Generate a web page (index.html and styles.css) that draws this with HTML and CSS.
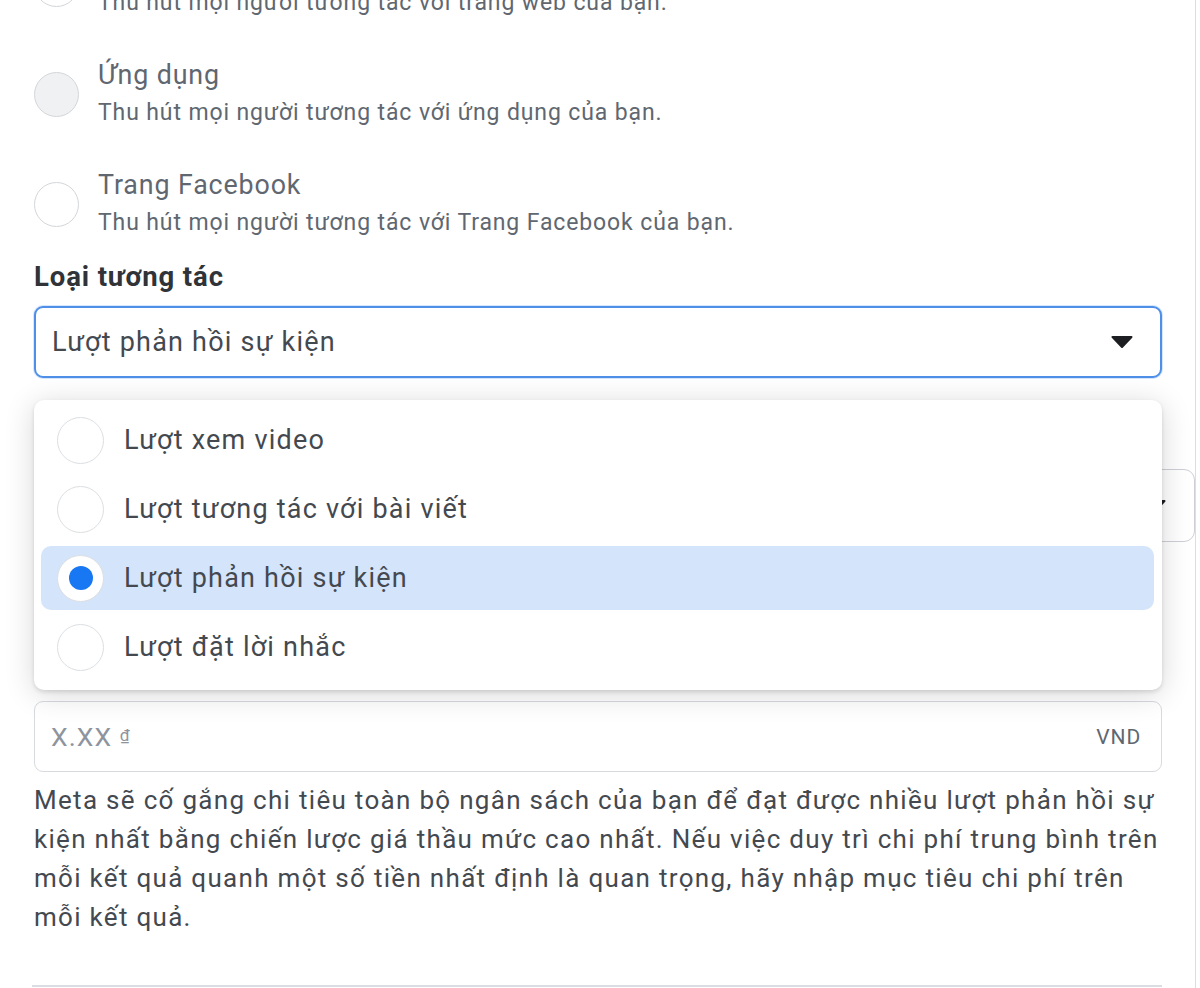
FILE: index.html
```html
<!DOCTYPE html>
<html lang="vi">
<head>
  <meta charset="UTF-8" />
  <title>Loại tương tác</title>
  <meta name="viewport" content="width=device-width, initial-scale=1.0" />
  <link rel="stylesheet" href="styles.css">
</head>
<body>
  <div class="panel">
    <div class="options">
      <div class="option">
        <span class="radio"></span>
        <div class="option-text">
          <div class="option-title">Trang web</div>
          <div class="option-desc">Thu hút mọi người tương tác với trang web của bạn.</div>
        </div>
      </div>
      <div class="option">
        <span class="radio disabled"></span>
        <div class="option-text">
          <div class="option-title">Ứng dụng</div>
          <div class="option-desc">Thu hút mọi người tương tác với ứng dụng của bạn.</div>
        </div>
      </div>
      <div class="option">
        <span class="radio"></span>
        <div class="option-text">
          <div class="option-title">Trang Facebook</div>
          <div class="option-desc">Thu hút mọi người tương tác với Trang Facebook của bạn.</div>
        </div>
      </div>
    </div>

    <div class="field-label">Loại tương tác</div>
    <div class="dropdown">
      <div class="select focused">
        <span>Lượt phản hồi sự kiện</span>
        <svg class="caret" width="22" height="12" viewBox="0 0 22 12"><path d="M1.5 1h19L11 11z" fill="#1c1e21" stroke="#1c1e21" stroke-width="2" stroke-linejoin="round"/></svg>
      </div>
      <ul class="menu">
        <li class="menu-item"><span class="radio"></span>Lượt xem video</li>
        <li class="menu-item"><span class="radio"></span>Lượt tương tác với bài viết</li>
        <li class="menu-item selected"><span class="radio checked"></span>Lượt phản hồi sự kiện</li>
        <li class="menu-item"><span class="radio"></span>Lượt đặt lời nhắc</li>
      </ul>
    </div>

    <div class="select bid-select">
      <span></span>
      <svg class="caret" width="22" height="12" viewBox="0 0 22 12"><path d="M1.5 1h19L11 11z" fill="#1c1e21" stroke="#1c1e21" stroke-width="2" stroke-linejoin="round"/></svg>
    </div>

    <div class="money-input">
      <span class="placeholder">X.XX <span class="dong">₫</span></span>
      <span class="currency">VND</span>
    </div>

    <p class="note">Meta sẽ cố gắng chi tiêu toàn bộ ngân sách của bạn để đạt được nhiều lượt phản hồi sự kiện nhất bằng chiến lược giá thầu mức cao nhất. Nếu việc duy trì chi phí trung bình trên mỗi kết quả quanh một số tiền nhất định là quan trọng, hãy nhập mục tiêu chi phí trên mỗi kết quả.</p>

    <div class="divider"></div>
  </div>
</body>
</html>
```

FILE: styles.css
```css
body {
  margin: 0;
  background: #fff;
  font-family: Roboto, "Noto Sans", Arial, sans-serif;
  color: #444950;
  letter-spacing: 0.055em;
  overflow: hidden;
}

.panel {
  display: flow-root;
  width: 1196px;
  height: 988px;
  box-sizing: border-box;
  padding: 0 33px 0 34px;
  border-right: 1px solid #dcdee1;
}

.options {
  display: flex;
  flex-direction: column;
  gap: 34px;
  margin-top: -54px;
}

.option {
  display: flex;
  align-items: center;
  gap: 19px;
}

.option-title {
  font-size: 26.8px;
  line-height: 38px;
  color: #606770;
}

.option-desc {
  font-size: 23px;
  line-height: 38px;
  color: #606770;
}

.radio {
  flex: none;
  width: 45px;
  height: 45px;
  box-sizing: border-box;
  border: 1.5px solid #d3d6da;
  border-radius: 50%;
  background: #fff;
}

.radio.disabled {
  background: #f0f1f2;
}

.radio.checked {
  display: flex;
  align-items: center;
  justify-content: center;
  border-color: #fff;
}

.radio.checked::after {
  content: "";
  width: 24px;
  height: 24px;
  border-radius: 50%;
  background: #1877f2;
}

.field-label {
  margin: 19px 0 13px;
  font-size: 27.5px;
  line-height: 32px;
  font-weight: 700;
  color: #303338;
}

.dropdown {
  position: relative;
}

.select {
  display: flex;
  align-items: center;
  justify-content: space-between;
  height: 72px;
  box-sizing: border-box;
  padding: 0 27px 0 16px;
  border: 1.5px solid #ccd0d5;
  border-radius: 9px;
  font-size: 27px;
  letter-spacing: 0.045em;
  color: #444950;
  background: #fff;
}

.select.focused {
  border: 2px solid #4f8fe8;
  box-shadow: 0 0 0 1px rgba(24, 119, 242, 0.18);
}

.caret {
  display: block;
}

.menu {
  position: absolute;
  top: 94px;
  left: 0;
  right: 0;
  margin: 0;
  padding: 8px 8px 11px 7px;
  list-style: none;
  background: #fff;
  border-radius: 10px;
  box-shadow: 0 4px 30px rgba(0, 0, 0, 0.16), 0 2px 4px rgba(0, 0, 0, 0.12);
  display: flex;
  flex-direction: column;
  gap: 5px;
  z-index: 2;
}

.menu-item {
  display: flex;
  align-items: center;
  gap: 20px;
  height: 64px;
  padding-left: 16px;
  border-radius: 10px;
  font-size: 27px;
  letter-spacing: 0.045em;
  color: #444950;
}

.menu-item .radio {
  width: 47px;
  height: 47px;
  border-color: #dcdfe2;
}

.menu-item.selected {
  background: #d4e4fa;
}

.bid-select {
  margin-top: 91px;
  margin-right: -33px;
  height: 73px;
  border-width: 1px;
  border-radius: 11px;
  padding-right: 28px;
}

.money-input {
  display: flex;
  align-items: center;
  justify-content: space-between;
  margin-top: 159px;
  height: 71px;
  box-sizing: border-box;
  padding: 0 20px 0 16px;
  border: 1.5px solid #d7dade;
  border-radius: 9px;
}

.placeholder {
  font-size: 26.5px;
  letter-spacing: 0.04em;
  color: #8d949e;
}

.dong {
  font-size: 17px;
  letter-spacing: 0;
  vertical-align: 5px;
  text-decoration: underline;
}

.currency {
  font-size: 21px;
  letter-spacing: 0.04em;
  color: #606770;
}

.note {
  margin: 9px 0 0;
  font-size: 26px;
  line-height: 39px;
  letter-spacing: 0.05em;
  color: #444950;
}

.divider {
  margin: 48px 0 0 -2px;
  height: 2px;
  background: #dadde1;
}
```
